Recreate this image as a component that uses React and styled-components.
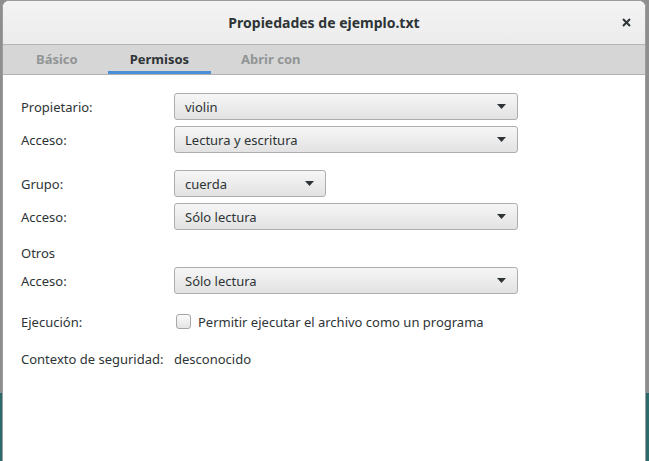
import React from 'react'
import styled, {createGlobalStyle} from 'styled-components'

const Global = createGlobalStyle`
  html, body {
    margin: 0;
    height: 100%;
  }
  body {
    font-family: "Noto Sans", "Open Sans", sans-serif;
    font-size: 13px;
    color: #2e3436;
    background: linear-gradient(to bottom, #8e8e8e 0, #8e8e8e 393px, #2d6a6a 393px);
    overflow: hidden;
  }
`;

const Window = styled.div`
  margin: 0 3px 0 2px;
  height: 461px;
  box-sizing: border-box;
  border: 1px solid #9c9c9c;
  border-bottom: none;
  border-radius: 7px 7px 0 0;
  background: #fff;
  display: flex;
  flex-direction: column;
  overflow: hidden;
`;

const HeaderBar = styled.div`
  height: 43px;
  flex-shrink: 0;
  border-bottom: 1px solid #b6b6b6;
  background: linear-gradient(to bottom, #f3f3f3, #ececec);
  display: grid;
  grid-template-columns: 1fr auto 1fr;
  align-items: center;
`;

const Title = styled.div`
  grid-column: 2;
  font-weight: bold;
  font-size: 14px;
  color: #2e3436;
`;

const CloseButton = styled.button`
  grid-column: 3;
  justify-self: end;
  margin-right: 7px;
  width: 24px;
  height: 24px;
  border: none;
  background: none;
  padding: 0;
  display: flex;
  align-items: center;
  justify-content: center;
`;

const TabBar = styled.div`
  height: 29px;
  flex-shrink: 0;
  border-bottom: 1px solid #b0b0b0;
  background: #d6d6d6;
  display: flex;
  gap: 8px;
  padding-left: 11px;
`;

const Tab = styled.div`
  box-sizing: border-box;
  height: 29px;
  padding: 0 22px;
  display: flex;
  align-items: center;
  border-top: 2px solid transparent;
  border-bottom: 3px solid ${p => p.$active ? '#4a90d9' : 'transparent'};
  font-weight: bold;
  color: ${p => p.$active ? '#2e3436' : '#929595'};
`;

const Content = styled.div`
  padding: 18px 18px 0 18px;
  display: flex;
  flex-direction: column;
`;

const Section = styled.div`
  margin-top: ${p => p.$space || 0}px;
  display: flex;
  flex-direction: column;
  gap: 6px;
`;

const Row = styled.div`
  display: grid;
  grid-template-columns: 153px auto;
  align-items: center;
  min-height: 27px;
`;

const Heading = styled.div`
  line-height: 16px;
  height: 16px;
`;

const Combo = styled.div`
  box-sizing: border-box;
  width: ${p => p.$w}px;
  height: 27px;
  border: 1px solid #adadad;
  border-radius: 3px;
  background: linear-gradient(to bottom, #f6f6f6, #e2e2e2);
  padding: 0 11px 0 10px;
  display: flex;
  align-items: center;
  justify-content: space-between;
`;

const Check = styled.span`
  display: flex;
  align-items: center;
  gap: 7px;
  padding-left: 2px;
`;

const Box = styled.span`
  box-sizing: border-box;
  width: 15px;
  height: 15px;
  border: 1px solid #a6a6a6;
  border-radius: 3px;
  background: linear-gradient(to bottom, #fafafa, #e4e4e4);
`;

const Arrow = () => (
    <svg width="9" height="5" viewBox="0 0 9 5">
        <polygon points="0,0 9,0 4.5,5" fill="#2e3436"/>
    </svg>
)

const Select = ({value, w = 344}) => (
    <Combo $w={w}>
        <span>{value}</span>
        <Arrow/>
    </Combo>
)

export default function App() {
    return (
        <>
            <Global/>
            <Window>
                <HeaderBar>
                    <Title>Propiedades de ejemplo.txt</Title>
                    <CloseButton>
                        <svg width="9" height="9" viewBox="0 0 9 9">
                            <path d="M1 1 L8 8 M8 1 L1 8" stroke="#2e3436" strokeWidth="2"/>
                        </svg>
                    </CloseButton>
                </HeaderBar>
                <TabBar>
                    <Tab>Básico</Tab>
                    <Tab $active>Permisos</Tab>
                    <Tab>Abrir con</Tab>
                </TabBar>
                <Content>
                    <Section>
                        <Row><span>Propietario:</span><Select value="violin"/></Row>
                        <Row><span>Acceso:</span><Select value="Lectura y escritura"/></Row>
                    </Section>
                    <Section $space={17}>
                        <Row><span>Grupo:</span><Select value="cuerda" w={152}/></Row>
                        <Row><span>Acceso:</span><Select value="Sólo lectura"/></Row>
                    </Section>
                    <Section $space={15}>
                        <Heading>Otros</Heading>
                        <Row><span>Acceso:</span><Select value="Sólo lectura"/></Row>
                    </Section>
                    <Section $space={14}>
                        <Row>
                            <span>Ejecución:</span>
                            <Check><Box/>Permitir ejecutar el archivo como un programa</Check>
                        </Row>
                    </Section>
                    <Section $space={10}>
                        <Row><span>Contexto de seguridad:</span><span>desconocido</span></Row>
                    </Section>
                </Content>
            </Window>
        </>
    )
}
